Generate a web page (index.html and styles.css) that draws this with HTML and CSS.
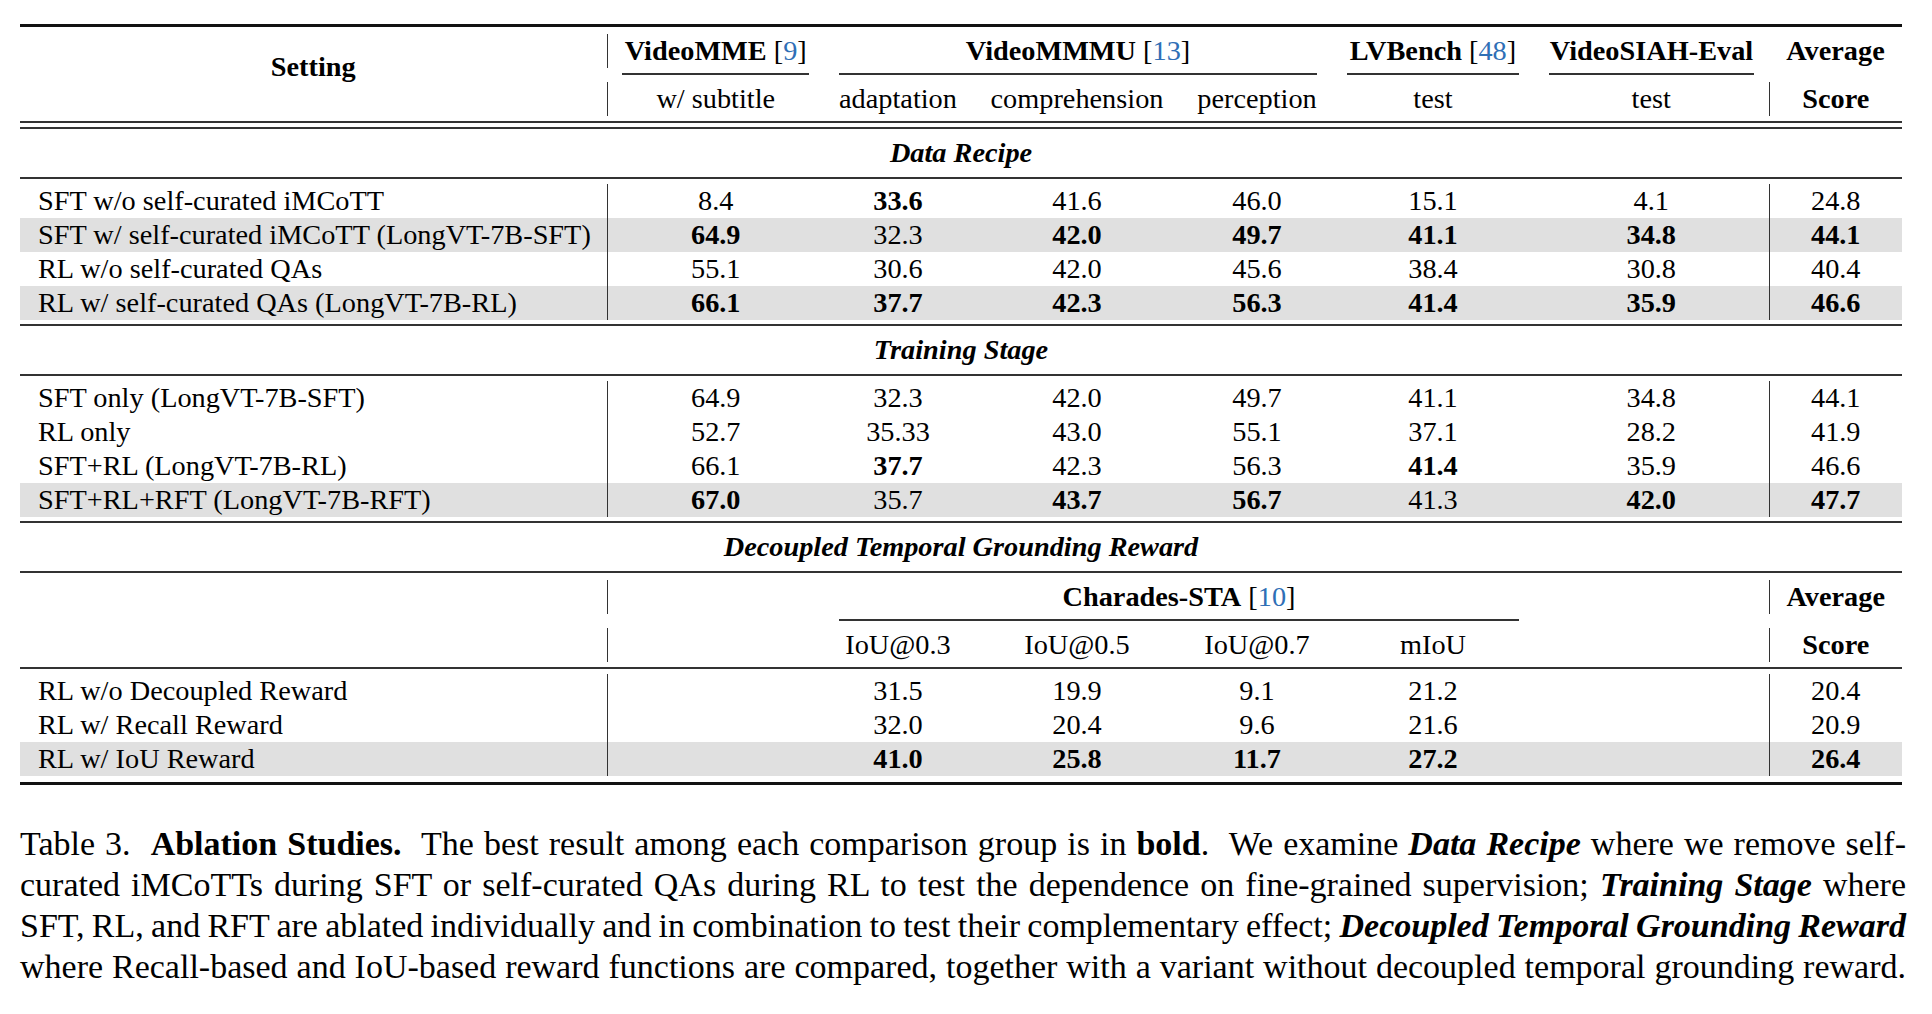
FILE: index.html
```html
<!DOCTYPE html>
<html lang="en">

<head>
    <meta charset="UTF-8">
    <meta name="viewport" content="width=device-width, initial-scale=1.0">
    <title>Table 3. Ablation Studies</title>
    <link rel="stylesheet" href="styles.css">
</head>

<body>
    <div class="page">
        <table class="ablation">
            <colgroup>
                <col class="c-setting">
                <col class="c-mme">
                <col class="c-adapt">
                <col class="c-comp">
                <col class="c-perc">
                <col class="c-lvb">
                <col class="c-siah">
                <col class="c-avg">
            </colgroup>

            <!-- header -->
            <tr class="sep top"><td colspan="8"><div class="line thick"></div></td></tr>
            <tr class="head">
                <td rowspan="3" class="setting-head"><b>Setting</b></td>
                <td class="vl"><b>VideoMME</b> [<span class="cite">9</span>]</td>
                <td colspan="3"><b>VideoMMMU</b> [<span class="cite">13</span>]</td>
                <td><b>LVBench</b> [<span class="cite">48</span>]</td>
                <td><b>VideoSIAH-Eval</b></td>
                <td><b>Average</b></td>
            </tr>
            <tr class="sep cmid">
                <td><div class="line"></div></td>
                <td colspan="3"><div class="line"></div></td>
                <td><div class="line"></div></td>
                <td><div class="line"></div></td>
                <td></td>
            </tr>
            <tr class="head">
                <td class="vl">w/ subtitle</td>
                <td>adaptation</td>
                <td>comprehension</td>
                <td>perception</td>
                <td>test</td>
                <td>test</td>
                <td class="vl"><b>Score</b></td>
            </tr>
            <tr class="sep double"><td colspan="8"><div class="line"></div><div class="line"></div></td></tr>

            <!-- data recipe -->
            <tr class="title"><td colspan="8">Data Recipe</td></tr>
            <tr class="sep below"><td colspan="8"><div class="line"></div></td></tr>
            <tr>
                <td class="name">SFT w/o self-curated iMCoTT</td>
                <td class="vl">8.4</td><td><b>33.6</b></td><td>41.6</td><td>46.0</td><td>15.1</td><td>4.1</td>
                <td class="vl">24.8</td>
            </tr>
            <tr class="hl">
                <td class="name">SFT w/ self-curated iMCoTT (LongVT-7B-SFT)</td>
                <td class="vl"><b>64.9</b></td><td>32.3</td><td><b>42.0</b></td><td><b>49.7</b></td><td><b>41.1</b></td><td><b>34.8</b></td>
                <td class="vl"><b>44.1</b></td>
            </tr>
            <tr>
                <td class="name">RL w/o self-curated QAs</td>
                <td class="vl">55.1</td><td>30.6</td><td>42.0</td><td>45.6</td><td>38.4</td><td>30.8</td>
                <td class="vl">40.4</td>
            </tr>
            <tr class="hl">
                <td class="name">RL w/ self-curated QAs (LongVT-7B-RL)</td>
                <td class="vl"><b>66.1</b></td><td><b>37.7</b></td><td><b>42.3</b></td><td><b>56.3</b></td><td><b>41.4</b></td><td><b>35.9</b></td>
                <td class="vl"><b>46.6</b></td>
            </tr>
            <tr class="sep above"><td colspan="8"><div class="line"></div></td></tr>

            <!-- training stage -->
            <tr class="title"><td colspan="8">Training Stage</td></tr>
            <tr class="sep below"><td colspan="8"><div class="line"></div></td></tr>
            <tr>
                <td class="name">SFT only (LongVT-7B-SFT)</td>
                <td class="vl">64.9</td><td>32.3</td><td>42.0</td><td>49.7</td><td>41.1</td><td>34.8</td>
                <td class="vl">44.1</td>
            </tr>
            <tr>
                <td class="name">RL only</td>
                <td class="vl">52.7</td><td>35.33</td><td>43.0</td><td>55.1</td><td>37.1</td><td>28.2</td>
                <td class="vl">41.9</td>
            </tr>
            <tr>
                <td class="name">SFT+RL (LongVT-7B-RL)</td>
                <td class="vl">66.1</td><td><b>37.7</b></td><td>42.3</td><td>56.3</td><td><b>41.4</b></td><td>35.9</td>
                <td class="vl">46.6</td>
            </tr>
            <tr class="hl">
                <td class="name">SFT+RL+RFT (LongVT-7B-RFT)</td>
                <td class="vl"><b>67.0</b></td><td>35.7</td><td><b>43.7</b></td><td><b>56.7</b></td><td>41.3</td><td><b>42.0</b></td>
                <td class="vl"><b>47.7</b></td>
            </tr>
            <tr class="sep above"><td colspan="8"><div class="line"></div></td></tr>

            <!-- decoupled temporal grounding reward -->
            <tr class="title"><td colspan="8">Decoupled Temporal Grounding Reward</td></tr>
            <tr class="sep below-head"><td colspan="8"><div class="line"></div></td></tr>
            <tr class="head">
                <td rowspan="3"></td>
                <td class="vl"></td>
                <td colspan="4"><b>Charades-STA</b> [<span class="cite">10</span>]</td>
                <td></td>
                <td class="vl"><b>Average</b></td>
            </tr>
            <tr class="sep cmid">
                <td></td>
                <td colspan="4"><div class="line"></div></td>
                <td></td>
                <td></td>
            </tr>
            <tr class="head">
                <td class="vl"></td>
                <td>IoU@0.3</td>
                <td>IoU@0.5</td>
                <td>IoU@0.7</td>
                <td>mIoU</td>
                <td></td>
                <td class="vl"><b>Score</b></td>
            </tr>
            <tr class="sep head-end"><td colspan="8"><div class="line"></div></td></tr>
            <tr>
                <td class="name">RL w/o Decoupled Reward</td>
                <td class="vl"></td><td>31.5</td><td>19.9</td><td>9.1</td><td>21.2</td><td></td>
                <td class="vl">20.4</td>
            </tr>
            <tr>
                <td class="name">RL w/ Recall Reward</td>
                <td class="vl"></td><td>32.0</td><td>20.4</td><td>9.6</td><td>21.6</td><td></td>
                <td class="vl">20.9</td>
            </tr>
            <tr class="hl">
                <td class="name">RL w/ IoU Reward</td>
                <td class="vl"></td><td><b>41.0</b></td><td><b>25.8</b></td><td><b>11.7</b></td><td><b>27.2</b></td><td></td>
                <td class="vl"><b>26.4</b></td>
            </tr>
            <tr class="sep bottom"><td colspan="8"><div class="line thick"></div></td></tr>
        </table>

        <p class="caption">
            <span class="ln">Table 3.&nbsp; <b>Ablation Studies.</b>&nbsp; The best result among each comparison group is in <b>bold</b>.&nbsp; We examine <b><i>Data Recipe</i></b> where we remove self-</span>
            <span class="ln">curated iMCoTTs during SFT or self-curated QAs during RL to test the dependence on fine-grained supervision; <b><i>Training Stage</i></b> where</span>
            <span class="ln">SFT, RL, and RFT are ablated individually and in combination to test their complementary effect; <b><i>Decoupled Temporal Grounding Reward</i></b></span>
            <span class="ln">where Recall-based and IoU-based reward functions are compared, together with a variant without decoupled temporal grounding reward.</span>
        </p>
    </div>
</body>

</html>
```

FILE: styles.css
```css
* {
    margin: 0;
    padding: 0;
    box-sizing: border-box;
}

body {
    background: #fff;
    color: #000;
    font-family: "Liberation Serif", "Times New Roman", serif;
}

.page {
    width: 1932px;
    padding: 24px 26px 0 20px;
}

/* table */
.ablation {
    width: 1882px;
    table-layout: fixed;
    border-collapse: collapse;
    border-spacing: 0;
    font-size: 28.3px;
}

.c-setting { width: 587px; }
.c-mme { width: 217px; }
.c-adapt { width: 148px; }
.c-comp { width: 210px; }
.c-perc { width: 150px; }
.c-lvb { width: 202px; }
.c-siah { width: 235px; }
.c-avg { width: 133px; }

.ablation td {
    height: 34px;
    line-height: 34px;
    padding: 0;
    text-align: center;
    white-space: nowrap;
}

.ablation td.name {
    text-align: left;
    padding-left: 18px;
}

.ablation td.vl {
    border-left: 1px solid #333;
}

.ablation tr.hl td {
    background-color: #e0e0e0;
}

.setting-head {
    vertical-align: top;
    padding-top: 16px !important;
}

.cite {
    color: #2f6fb6;
}

/* section titles */
.ablation tr.title td {
    height: 48px;
    line-height: 48px;
    font-weight: bold;
    font-style: italic;
}

/* rules */
.ablation tr.sep td {
    height: auto;
    line-height: 0;
}

.line {
    height: 2px;
    background-color: #333;
}

.line.thick {
    height: 3px;
    background-color: #111;
}

.sep.top td { padding-bottom: 7px; }
.sep.cmid td { padding: 5px 0 7px; }
.sep.cmid .line { margin: 0 15px; }
.sep.double td { padding-top: 5px; }
.sep.double .line + .line { margin-top: 4px; }
.sep.below td { padding-bottom: 5px; }
.sep.above td { padding-top: 4px; }
.sep.below-head td { padding-bottom: 7px; }
.sep.head-end td { padding: 5px 0 5px; }
.sep.bottom td { padding-top: 6px; }

/* caption */
.caption {
    width: 1886px;
    margin-top: 38px;
    font-size: 34px;
    line-height: 41px;
}

.caption .ln {
    display: block;
    white-space: nowrap;
    word-spacing: -4px;
    text-align: justify;
    text-align-last: justify;
}
```
